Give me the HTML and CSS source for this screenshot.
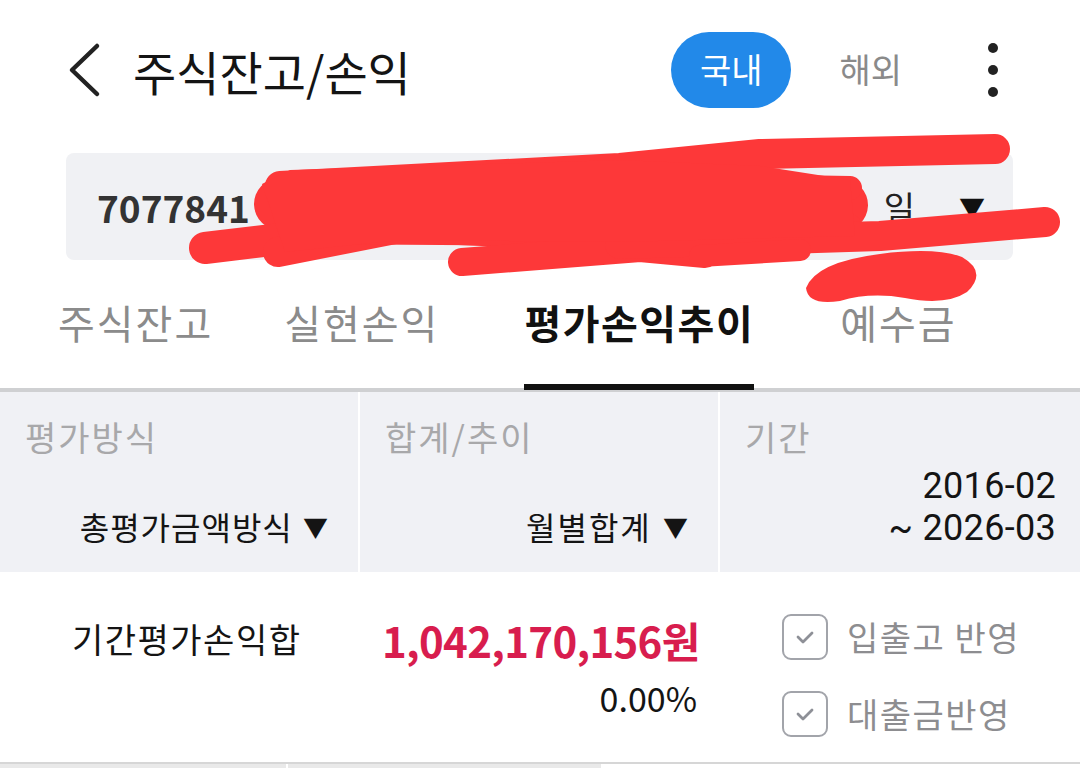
FILE: index.html
```html
<!DOCTYPE html>
<html>
    <head>
        <title>주식잔고/손익</title>
        <link rel="stylesheet" href="styles.css">
    </head>
    <body>
        <header class='topbar'>
            <svg class='back' width='36' height='56' viewBox='0 0 36 56'>
                <polyline points='31,4 6,28 31,52' fill='none' stroke='#222' stroke-width='4.5' stroke-linecap='round' stroke-linejoin='round'/>
            </svg>
            <h1 class='title'>주식잔고/손익</h1>
            <div class='market'>
                <span class='pill on'>국내</span>
                <span class='pill off'>해외</span>
            </div>
            <div class='kebab'><i></i><i></i><i></i></div>
        </header>

        <div class='account'>
            <span class='accno'>7077841</span>
            <span class='accname'>일</span>
            <span class='caret'>▼</span>
        </div>

        <nav class='tabs'>
            <span class='tab'>주식잔고</span>
            <span class='tab'>실현손익</span>
            <span class='tab active'>평가손익추이</span>
            <span class='tab'>예수금</span>
        </nav>

        <div class='filters'>
            <div class='cell'>
                <div class='label'>평가방식</div>
                <div class='value'>총평가금액방식 <span class='tri'>▼</span></div>
            </div>
            <div class='cell'>
                <div class='label'>합계/추이</div>
                <div class='value wide'>월별합계 <span class='tri'>▼</span></div>
            </div>
            <div class='cell period'>
                <div class='label'>기간</div>
                <div class='dates'>
                    <div>2016-02</div>
                    <div>~ 2026-03</div>
                </div>
            </div>
        </div>

        <div class='summary'>
            <div class='sumlabel'>기간평가손익합</div>
            <div class='amount'>
                <div class='won'>1,042,170,156원</div>
                <div class='rate'>0.00%</div>
            </div>
            <div class='checks'>
                <label class='chk'><span class='box'><svg width='26' height='26' viewBox='0 0 26 26'><polyline points='6,13 11,18 20,9' fill='none' stroke='#8e9097' stroke-width='2.8' stroke-linecap='round' stroke-linejoin='round'/></svg></span>입출고 반영</label>
                <label class='chk'><span class='box'><svg width='26' height='26' viewBox='0 0 26 26'><polyline points='6,13 11,18 20,9' fill='none' stroke='#8e9097' stroke-width='2.8' stroke-linecap='round' stroke-linejoin='round'/></svg></span>대출금반영</label>
            </div>
        </div>

        <div class='bottomrow'>
            <span></span><span></span>
        </div>

        <!-- masking scribble over the account number -->
        <svg class='scribble' width='1080' height='768' viewBox='0 0 1080 768'>
            <g fill='none' stroke='#fd3839' stroke-linecap='round' stroke-linejoin='round'>
                <path d='M280 204 L560 196 L842 205' stroke-width='52'/>
                <path d='M280 186 L620 168 L760 154 L995 149' stroke-width='30'/>
                <path d='M610 184 L850 188' stroke-width='24'/>
                <path d='M205 248 L390 226 L620 236' stroke-width='32'/>
                <path d='M278 252 L400 228' stroke-width='30'/>
                <path d='M300 226 L845 230' stroke-width='36'/>
                <path d='M462 262 L640 248 L705 254' stroke-width='28'/>
                <path d='M620 244 L880 236 L1045 222' stroke-width='30'/>
                <path d='M700 256 L800 250' stroke-width='22'/>
            </g>
            <polygon points='262,184 290,170 620,160 760,166 850,180 855,236 620,242 400,240 285,252' fill='#fd3839'/>
            <path d='M806 288 Q816 262 880 254 Q935 247 962 257 Q988 272 967 292 Q946 306 905 298 Q870 292 840 301 Q808 306 806 288 Z' fill='#fd3839'/>
        </svg>
    </body>
</html>
```

FILE: styles.css
```css
body{
    margin: 0;
    background-color: #ffffff;
    font-family: "Noto Sans CJK KR", "Noto Sans", sans-serif;
    color: #111;
    width: 1080px;
    height: 768px;
    overflow: hidden;
    position: relative;
}
.topbar{
    display: flex;
    align-items: center;
    height: 140px;
    padding-left: 66px;
    padding-right: 82px;
}
.back{
    display: block;
}
.title{
    margin: 0 0 0 31px;
    font-size: 47px;
    font-weight: 400;
    color: #141414;
    flex: 1;
}
.market{
    display: flex;
    align-items: center;
}
.pill{
    font-size: 34px;
    color: #8a8a8a;
    height: 76px;
    line-height: 74px;
    border-radius: 38px;
}
.pill.on{
    background-color: #2289e9;
    color: #ffffff;
    padding: 0 29px;
}
.pill.off{
    margin-left: 48px;
}
.kebab{
    margin-left: 86px;
    display: flex;
    flex-direction: column;
    gap: 12px;
}
.kebab i{
    display: block;
    width: 10px;
    height: 10px;
    border-radius: 50%;
    background-color: #222;
}
.account{
    margin: 13px 67px 0 66px;
    height: 107px;
    background-color: #f0f1f4;
    border-radius: 8px;
    display: flex;
    align-items: center;
    padding: 0 28px 0 31px;
}
.accno{
    font-size: 37px;
    font-weight: 700;
    color: #333;
    flex: 1;
}
.accname{
    font-size: 34px;
    color: #222;
}
.caret{
    font-size: 26px;
    margin-left: 44px;
    color: #111;
}
.tabs{
    display: flex;
    align-items: flex-start;
    height: 128px;
    border-bottom: 4px solid #cfd0d2;
    padding-left: 58px;
}
.tab{
    font-size: 40px;
    color: #8b8b8b;
    height: 128px;
    line-height: 124px;
    box-sizing: border-box;
    letter-spacing: 2px;
}
.tab:nth-child(2){ margin-left: 71px; }
.tab:nth-child(3){ margin-left: 85px; }
.tab:nth-child(4){ margin-left: 86px; }
.tab.active{
    color: #111;
    font-weight: 700;
    border-bottom: 6px solid #111;
    height: 130px;
    letter-spacing: 1.5px;
}
.filters{
    display: grid;
    grid-template-columns: 358px 358px 1fr;
    gap: 2px;
    background-color: #ffffff;
    height: 180px;
}
.cell{
    background-color: #f0f1f5;
    display: flex;
    flex-direction: column;
    justify-content: space-between;
    padding: 24px 30px 24px 25px;
}
.cell.period{
    padding-right: 24px;
    padding-bottom: 23px;
}
.label{
    font-size: 34px;
    color: #a8a8aa;
    line-height: 41px;
    letter-spacing: 2px;
}
.value{
    font-size: 32px;
    text-align: right;
    color: #141414;
    line-height: 1.3;
    letter-spacing: 1px;
}
.value.wide{
    letter-spacing: 2px;
}
.tri{
    font-size: 25px;
    margin-left: 2px;
    vertical-align: 3px;
    letter-spacing: 0;
}
.dates{
    font-family: Roboto, "Noto Sans CJK KR", sans-serif;
    font-size: 36px;
    text-align: right;
    line-height: 42px;
    letter-spacing: 0.3px;
    color: #141414;
}
.summary{
    display: flex;
    height: 190px;
    padding: 0 0 0 72px;
    box-sizing: border-box;
}
.sumlabel{
    font-size: 34px;
    letter-spacing: 1.5px;
    color: #141414;
    padding-top: 42px;
    width: 310px;
}
.amount{
    width: 315px;
    text-align: right;
    padding-top: 40px;
}
.won{
    font-size: 42px;
    font-weight: 700;
    color: #d81d4e;
    letter-spacing: -0.7px;
    line-height: 56px;
    white-space: nowrap;
}
.rate{
    font-size: 34px;
    color: #141414;
    line-height: 60px;
}
.checks{
    margin-left: 85px;
    padding-top: 40px;
    display: flex;
    flex-direction: column;
    gap: 28px;
}
.chk{
    display: flex;
    align-items: center;
    font-size: 34px;
    letter-spacing: 1.5px;
    color: #8d8d90;
    gap: 19px;
    white-space: nowrap;
}
.box{
    width: 42px;
    height: 42px;
    border: 2.5px solid #a2a4aa;
    border-radius: 9px;
    display: flex;
    align-items: center;
    justify-content: center;
}
.bottomrow{
    display: flex;
    height: 6px;
    border-top: 2px solid #d6d6d6;
}
.bottomrow span{
    background-color: #e9e9e9;
    width: 286px;
    border-right: 2px solid #ffffff;
}
.bottomrow span:nth-child(2){
    width: 313px;
}
.scribble{
    position: absolute;
    left: 0;
    top: 0;
    pointer-events: none;
}
```
